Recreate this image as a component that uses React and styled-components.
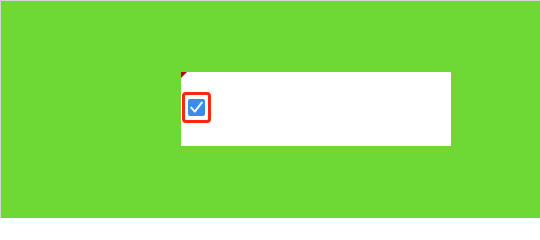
import React from 'react';
import styled, { createGlobalStyle } from 'styled-components';

const GlobalStyle = createGlobalStyle`
  html, body {
    margin: 0;
    padding: 0;
    background: #ffffff;
    font-family: "Liberation Sans", Arial, sans-serif;
  }
`;

const Stage = styled.div`
  box-sizing: border-box;
  width: 540px;
  height: 218px;
  background: #6ed835;
  border-top: 1px solid #d4d4d4;
  border-left: 1px solid #d4d4d4;
  padding: 71px 0 0 180px;
`;

const Card = styled.div`
  position: relative;
  box-sizing: border-box;
  width: 270px;
  height: 74px;
  background: #ffffff;
  padding: 20px 0 0 1px;
`;

const CornerMark = styled.span`
  position: absolute;
  top: 0;
  left: 0;
  width: 0;
  height: 0;
  border-top: 6px solid #b80000;
  border-right: 6px solid transparent;
`;

const CheckFrame = styled.label`
  box-sizing: border-box;
  display: flex;
  align-items: center;
  justify-content: center;
  width: 29px;
  height: 31px;
  border: 3px solid #ff2414;
  border-radius: 4px;
`;

const Box = styled.span`
  box-sizing: border-box;
  display: flex;
  width: 17px;
  height: 17px;
  border-radius: 2px;
  background: ${(p) => (p.checked ? '#3b8beb' : '#ffffff')};
  border: ${(p) => (p.checked ? 'none' : '1px solid #767676')};
`;

const HiddenInput = styled.input`
  display: none;
`;

export default function App() {
  const [checked, setChecked] = React.useState(true);

  return (
    <>
      <GlobalStyle />
      <Stage>
        <Card>
          <CornerMark />
          <CheckFrame>
            <HiddenInput
              type="checkbox"
              checked={checked}
              onChange={(e) => setChecked(e.target.checked)}
            />
            <Box checked={checked}>
              {checked && (
                <svg width="17" height="17" viewBox="0 0 17 17">
                  <path
                    d="M3.2 8.6 L6.8 12.6 L13.8 3.6"
                    fill="none"
                    stroke="#f4f8ff"
                    strokeWidth="2"
                    strokeLinecap="round"
                    strokeLinejoin="round"
                  />
                </svg>
              )}
            </Box>
          </CheckFrame>
        </Card>
      </Stage>
    </>
  );
}
